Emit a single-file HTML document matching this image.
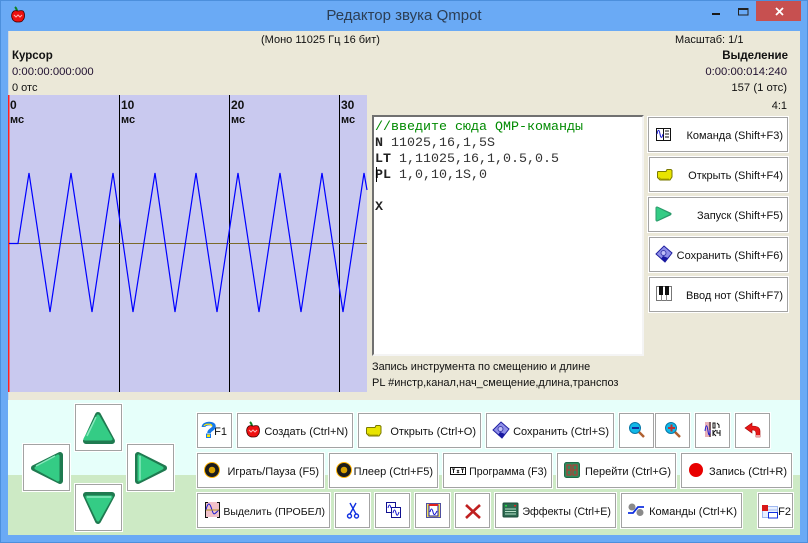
<!DOCTYPE html>
<html><head><meta charset="utf-8">
<style>
html,body{margin:0;padding:0;width:808px;height:543px;overflow:hidden;background:#6aaaf5}
body{position:relative;font-family:"Liberation Sans",sans-serif;font-size:11px;color:#111}
div{position:absolute;box-sizing:border-box}
.t{line-height:14px;white-space:nowrap}
.r{text-align:right}
.b{font-weight:bold;font-size:11.5px}
.n{font-size:11.3px}
.btn{background:#fff;border:1px solid #a3a3a3;height:35px;line-height:36px;text-align:right;padding-right:4px;white-space:nowrap;box-shadow:0 0 0 1px #fff}
.m{font-family:"Liberation Mono",monospace;font-size:13.33px;line-height:16px;white-space:pre;left:375px;color:#333}
</style></head>
<body>
<div style="left:0;top:0;width:808px;height:543px;border:1px solid #4c8fdc"></div>
<div class="t" style="left:204px;width:400px;top:7px;line-height:18px;text-align:center;font-size:15px;color:#2c3e54">Редактор звука Qmpot</div>
<div style="left:756px;top:1px;width:45px;height:20px;background:#c75050"></div>
<div style="left:8px;top:31px;width:792px;height:504px;background:#ebe8d8;border-left:1px solid #d0d8e0"></div>
<div style="left:8px;top:400px;width:792px;height:75px;background:#e6fffa"></div>
<div style="left:8px;top:475px;width:792px;height:60px;background:#cdeac5"></div>

<div class="t" style="left:261px;top:33px">(Моно 11025 Гц 16 бит)</div>
<div class="t b" style="left:12px;top:49px">Курсор</div>
<div class="t n" style="left:12px;top:65px;color:#201030">0:00:00:000:000</div>
<div class="t" style="left:12px;top:81px">0 отс</div>
<div class="t" style="left:675px;top:33px">Масштаб: 1/1</div>
<div class="t b r" style="right:20px;top:49px">Выделение</div>
<div class="t n r" style="right:21px;top:65px;color:#201030">0:00:00:014:240</div>
<div class="t n r" style="right:21px;top:81px">157 (1 отс)</div>
<div class="t r" style="right:21px;top:99px">4:1</div>

<!-- waveform -->
<svg style="position:absolute;left:0;top:0" width="808" height="543" viewBox="0 0 808 543">
<rect x="8" y="95" width="359" height="297" fill="#c9c9ef"/>
<rect x="8" y="95" width="1.5" height="297" fill="#ff2020"/>
<g fill="#000"><rect x="119" y="95" width="1" height="297"/><rect x="229" y="95" width="1" height="297"/><rect x="339" y="95" width="1" height="297"/></g>
<rect x="9" y="243" width="358" height="1" fill="#7b6a2a"/>
<polyline fill="none" stroke="#0000ff" stroke-width="1.2" points="9,243.5 18,243.5 29,173 50,312 71,173 92,312 113,173 133,312 155,173 175,312 196,173 217,312 238,173 259,312 280,173 301,312 322,173 343,312 364,173 367,190"/>
</svg>
<div class="t b" style="left:10px;top:98px;font-size:12px">0</div>
<div class="t b" style="left:121px;top:98px;font-size:12px">10</div>
<div class="t b" style="left:231px;top:98px;font-size:12px">20</div>
<div class="t b" style="left:341px;top:98px;font-size:12px">30</div>
<div class="t b" style="left:10px;top:113px;font-size:11px">мс</div>
<div class="t b" style="left:121px;top:113px;font-size:11px">мс</div>
<div class="t b" style="left:231px;top:113px;font-size:11px">мс</div>
<div class="t b" style="left:341px;top:113px;font-size:11px">мс</div>

<!-- editor -->
<div style="left:372px;top:115px;width:272px;height:241px;background:#fff;border:2px solid;border-color:#707070 #f4f4f4 #f4f4f4 #707070"></div>
<div class="m" style="top:120px;color:#008a00">//введите сюда QMP-команды</div>
<div class="m" style="top:136px"><b style="color:#222">N</b> 11025,16,1,5S</div>
<div class="m" style="top:152px"><b style="color:#222">LT</b> 1,11025,16,1,0.5,0.5</div>
<div class="m" style="top:168px"><b style="color:#222">PL</b> 1,0,10,1S,0</div>
<div class="m" style="top:200px"><b style="color:#222">X</b></div>
<div style="left:376px;top:167px;width:1px;height:15px;background:#000"></div>

<div class="t" style="left:372px;top:360px;font-size:10.9px">Запись инструмента по смещению и длине</div>
<div class="t" style="left:372px;top:376px;font-size:11px">PL #инстр,канал,нач_смещение,длина,транспоз</div>

<!-- right buttons -->
<div class="btn" style="left:648px;top:117px;width:140px">Команда (Shift+F3)</div>
<div class="btn" style="left:649px;top:157px;width:139px">Открыть (Shift+F4)</div>
<div class="btn" style="left:648px;top:197px;width:140px">Запуск (Shift+F5)</div>
<div class="btn" style="left:649px;top:237px;width:139px">Сохранить (Shift+F6)</div>
<div class="btn" style="left:649px;top:277px;width:139px">Ввод нот (Shift+F7)</div>

<!-- arrow buttons -->
<div class="btn" style="left:75px;top:404px;width:47px;height:47px"></div>
<div class="btn" style="left:23px;top:444px;width:47px;height:47px"></div>
<div class="btn" style="left:127px;top:444px;width:47px;height:47px"></div>
<div class="btn" style="left:75px;top:484px;width:47px;height:47px"></div>

<!-- row 1 -->
<div class="btn" style="left:197px;top:413px;width:35px">F1</div>
<div class="btn" style="left:237px;top:413px;width:116px">Создать (Ctrl+N)</div>
<div class="btn" style="left:358px;top:413px;width:123px">Открыть (Ctrl+O)</div>
<div class="btn" style="left:486px;top:413px;width:128px">Сохранить (Ctrl+S)</div>
<div class="btn" style="left:619px;top:413px;width:35px"></div>
<div class="btn" style="left:655px;top:413px;width:35px"></div>
<div class="btn" style="left:695px;top:413px;width:35px"></div>
<div class="btn" style="left:735px;top:413px;width:35px"></div>
<!-- row 2 -->
<div class="btn" style="left:197px;top:453px;width:127px">Играть/Пауза (F5)</div>
<div class="btn" style="left:329px;top:453px;width:109px">Плеер (Ctrl+F5)</div>
<div class="btn" style="left:443px;top:453px;width:109px;font-size:10.6px">Программа (F3)</div>
<div class="btn" style="left:557px;top:453px;width:119px">Перейти (Ctrl+G)</div>
<div class="btn" style="left:681px;top:453px;width:111px">Запись (Ctrl+R)</div>
<!-- row 3 -->
<div class="btn" style="left:197px;top:493px;width:133px;font-size:10.5px">Выделить (ПРОБЕЛ)</div>
<div class="btn" style="left:335px;top:493px;width:35px"></div>
<div class="btn" style="left:375px;top:493px;width:35px"></div>
<div class="btn" style="left:415px;top:493px;width:35px"></div>
<div class="btn" style="left:455px;top:493px;width:35px"></div>
<div class="btn" style="left:495px;top:493px;width:121px;font-size:10.7px">Эффекты (Ctrl+E)</div>
<div class="btn" style="left:621px;top:493px;width:121px">Команды (Ctrl+K)</div>
<div class="btn" style="left:758px;top:493px;width:35px;padding-right:1px">F2</div>

<!-- icons -->
<svg style="position:absolute;left:0;top:0" width="808" height="543" viewBox="0 0 808 543">
<defs>
<g id="folder"><path d="M1 3.500h8l1-2h4l1 1v6.500l-2 3H3l-2.500-2.500V4z" fill="#e8e400" stroke="#7a7a00" stroke-width="1"/><path d="M2 9.500l2 1.500h8" stroke="#b0a800" fill="none"/></g>
<g id="save"><path d="M8 0l8 7-7 9L0 8z" fill="#8f8fe8" stroke="#2020a0"/><path d="M5 13l4 3 3-4-5-2z" fill="#1818a0"/><circle cx="7.500" cy="7" r="2.500" fill="#c0c0f8" stroke="#4040b0"/></g>
<g id="disc"><circle cx="8" cy="8" r="8" fill="#ffb400"/><circle cx="8" cy="8" r="7" fill="#1c1c1c"/><circle cx="8" cy="8" r="3.300" fill="#d8a000"/></g>
<g id="apple"><path d="M6 5C6 3 5 1 4 0" stroke="#108020" stroke-width="2" fill="none"/><path d="M3 4c2-1 3 0 4 0s3-1 5 0c2 2 2 7 0 9-1 2-3 2-5 2s-3 0-5-2C0 10 0 6 3 4z" fill="#ee1010" stroke="#400000" stroke-width=".8"/><path d="M3 8l2 2 2-2 2 2 2-2" stroke="#ffb0b0" fill="none"/></g>
<g id="mag"><circle cx="6" cy="6" r="5.500" fill="#10b8e8" stroke="#0878a8"/><path d="M10 10l5 5" stroke="#b06030" stroke-width="2.500"/></g>
</defs>

<!-- title apple -->
<use href="#apple" transform="translate(11,7)"/>
<!-- min/max/close -->
<rect x="712" y="13" width="8" height="2" fill="#1a1a1a"/>
<rect x="738.500" y="8.500" width="9.500" height="6.500" fill="none" stroke="#222" stroke-width="1"/>
<rect x="738" y="8" width="10" height="2" fill="#222"/>
<path d="M776 8l7 7M783 8l-7 7" stroke="#fff" stroke-width="1.800"/>

<!-- right icons -->
<g transform="translate(656,128)"><rect x=".5" y=".5" width="14" height="12" fill="#fff" stroke="#111"/><path d="M7.500 0v13" stroke="#111"/><path d="M1 6c1-5 2-5 3 0s2 4 3 0" stroke="#1818d0" fill="none"/><path d="M9 3h4M9 6h4M9 9h4" stroke="#111"/></g>
<use href="#folder" transform="translate(657,168)"/>
<path d="M657 208l13 6-13 6z" fill="#34cc85" stroke="#2a9a6a" stroke-width="3" stroke-linejoin="round"/>
<path d="M657 208l12 6-12 6z" fill="#34cc85" stroke="#34cc85" stroke-width="1"/>
<use href="#save" transform="translate(656,246)"/>
<g transform="translate(656,286)"><rect x=".5" y=".5" width="15" height="14" fill="#fff" stroke="#777"/><rect x="3" y="0" width="4" height="9" fill="#111"/><rect x="9" y="0" width="4" height="9" fill="#111"/><path d="M5.500 9v6M10.500 9v6" stroke="#888"/></g>

<!-- arrows -->
<g stroke-linejoin="round">
<path d="M98 415L112 441H86z" fill="#1f7a50" stroke="#1f7a50" stroke-width="6"/>
<path d="M98 416L111 439H85z" fill="#34cc85" stroke="#34cc85" stroke-width="3"/>
<path d="M96 417L87 436" stroke="#86e8bc" stroke-width="1.500"/>

<path d="M34 468L60 455V481z" fill="#1f7a50" stroke="#1f7a50" stroke-width="6"/>
<path d="M36 468L58 456V480z" fill="#34cc85" stroke="#34cc85" stroke-width="3"/>
<path d="M36 466L55 456" stroke="#86e8bc" stroke-width="1.500"/>

<path d="M164 468L138 455V481z" fill="#1f7a50" stroke="#1f7a50" stroke-width="6"/>
<path d="M162 468L139 456V480z" fill="#34cc85" stroke="#34cc85" stroke-width="3"/>
<path d="M140 456V480" stroke="#86e8bc" stroke-width="1.500"/>

<path d="M98 521L86 495H112z" fill="#1f7a50" stroke="#1f7a50" stroke-width="6"/>
<path d="M98 520L87 497H111z" fill="#34cc85" stroke="#34cc85" stroke-width="3"/>
<path d="M87 497H111" stroke="#86e8bc" stroke-width="1.500"/>
</g>

<!-- row1 icons -->
<g transform="translate(201,422)" fill="none"><path d="M2.500 5C2.500 1 13 0 13 4.500c0 3-5 3-5 6.500" stroke="#1878e8" stroke-width="3.600"/><path d="M3 4C4 2 11 1 11 4.500" stroke="#ffe800" stroke-width="1.200"/><rect x="5.500" y="12" width="4" height="3.500" fill="#ffe800" stroke="#1878e8"/></g>
<use href="#apple" transform="translate(246,422)"/>
<use href="#folder" transform="translate(366,424)"/>
<use href="#save" transform="translate(493,422)"/>
<use href="#mag" transform="translate(629,422)"/><path d="M632 428h7" stroke="#1030a0" stroke-width="2"/>
<use href="#mag" transform="translate(665,422)"/><path d="M668 428h7M671.500 424.500v7" stroke="#c03030" stroke-width="2"/>
<g transform="translate(705,422)"><rect x="0" y="0" width="6" height="15" fill="#e8b0b8"/><path d="M5 0v15" stroke="#111"/><path d="M0 9c1-7 2-7 3 0s2 3 2-1" stroke="#1818d0" fill="none"/><path d="M8 1v5h2V1zM12 1l2 2v3M8 8v6M8 11l3-3M8 11l3 3M12 8v3h3M15 8v6" stroke="#111" fill="none"/></g>
<g transform="translate(745,423)"><path d="M7 0L0 5l7 5V7c3 0 4 1 4 3v4h4V8C15 4 11 3 7 3z" fill="#e81818" stroke="#a00000" stroke-width=".6"/><path d="M11 12h4v2h-4z" fill="#f0a0a0"/></g>

<!-- row2 icons -->
<use href="#disc" transform="translate(204,462)"/>
<use href="#disc" transform="translate(336,462)"/>
<g transform="translate(450,467)"><rect x=".5" y=".5" width="15" height="7" fill="#fff" stroke="#111"/><path d="M2 2h3M3.500 2v4M7 3l2 3M9 3l-2 3M11 2h3M12.500 2v4" stroke="#111"/></g>
<g transform="translate(564,462)"><rect x=".5" y=".5" width="15" height="15" rx="2" fill="#2f8a5c" stroke="#1d6a48"/><rect x="3" y="3" width="4" height="10" fill="none" stroke="#c83030"/><rect x="9" y="3" width="4" height="10" fill="none" stroke="#c83030"/><path d="M3 8h4M9 8h4" stroke="#c83030"/></g>
<circle cx="696" cy="470" r="7" fill="#e80000"/>

<!-- row3 icons -->
<g transform="translate(205,502)"><rect x="1" y="0" width="13" height="15" fill="#f0c0c8"/><path d="M.5 0v16M14.500 0v16M0 15.500h3M12 15.500h3M0 .5h3M12 .5h3" stroke="#111"/><path d="M1 8c2-9 4-7 6 0s3 3 7 0" stroke="#1818d0" fill="none"/><path d="M1 8h13" stroke="#b09020"/></g>
<g transform="translate(347,503)" fill="none" stroke="#1030e0" stroke-width="1.400"><path d="M9 0L3 11M3 0l6 11"/><circle cx="2.500" cy="13" r="2"/><circle cx="9.500" cy="13" r="2"/></g>
<g transform="translate(386,502)"><rect x=".5" y=".5" width="9" height="10" fill="#fff" stroke="#101090"/><rect x="5.500" y="5.500" width="9" height="10" fill="#fff" stroke="#101090"/><path d="M2 6c1-4 2-4 3 0M7 11c1-4 2-4 3 0s2 2 3-1" stroke="#1818d0" fill="none"/></g>
<g transform="translate(426,503)"><rect x=".5" y=".5" width="14" height="14" fill="#f0e060" stroke="#5050a0"/><rect x="3" y="2" width="9" height="11" fill="#fff" stroke="#1818a0"/><rect x="3" y="1" width="9" height="2" fill="#e02020"/><path d="M4 9c1-4 2-4 3 0s2 3 4-1" stroke="#1818d0" fill="none"/></g>
<path d="M466 505l14 13M480 505l-14 13" stroke="#c02020" stroke-width="2.600"/>
<g transform="translate(503,503)"><rect x="0" y="0" width="15" height="14" rx="1" fill="#2d6a50" stroke="#1a4a38"/><path d="M2 6h11M2 8.500h11M2 11h11" stroke="#b8e0c8"/><rect x="2" y="2" width="2" height="1.500" fill="#20e040"/><rect x="11" y="2" width="2" height="1.500" fill="#e02020"/></g>
<g transform="translate(628,503)"><circle cx="4" cy="4" r="3.500" fill="#8a8a8a"/><circle cx="12" cy="9.500" r="3.500" fill="#8a8a8a"/><path d="M0 10h5l5-6h6" stroke="#1030e0" stroke-width="1.800" fill="none"/></g>
<g transform="translate(762,504)"><rect x=".5" y="2.500" width="15" height="11" fill="#e8f0ff" stroke="#a0b8f0"/><path d="M1 6h14" stroke="#a0b8f0"/><rect x="0" y="1" width="6" height="6" fill="#d81818"/><rect x="6.500" y="8.500" width="9" height="5.500" fill="#fff" stroke="#1030e0"/></g>
</svg>
</body></html>
